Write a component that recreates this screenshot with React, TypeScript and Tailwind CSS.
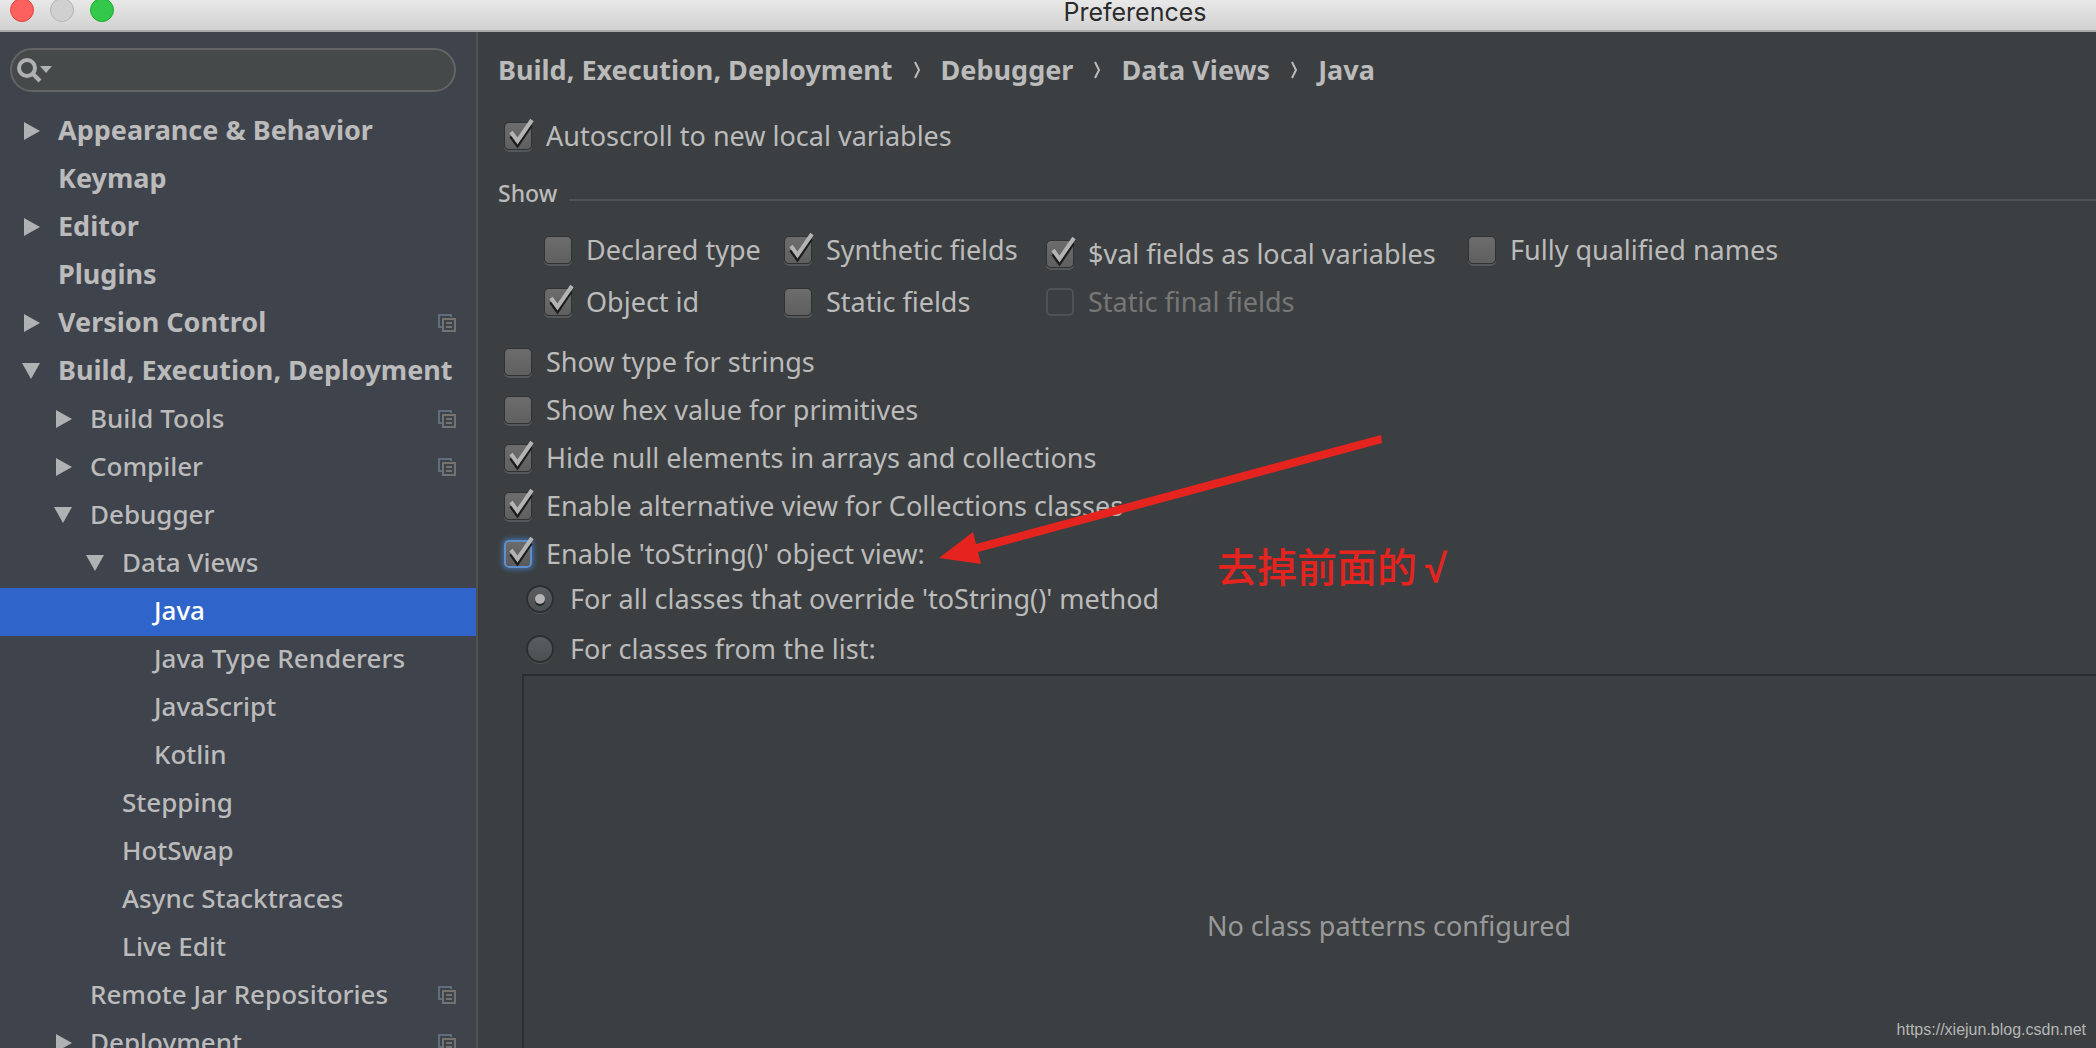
import React from "react";

type TreeItem = {
  label: string;
  level: 0 | 1 | 2 | 3;
  arrow?: "right" | "down";
  bold?: boolean;
  project?: boolean;
  selected?: boolean;
};

const tree: TreeItem[] = [
  { label: "Appearance & Behavior", level: 0, arrow: "right", bold: true },
  { label: "Keymap", level: 0, bold: true },
  { label: "Editor", level: 0, arrow: "right", bold: true },
  { label: "Plugins", level: 0, bold: true },
  { label: "Version Control", level: 0, arrow: "right", bold: true, project: true },
  { label: "Build, Execution, Deployment", level: 0, arrow: "down", bold: true },
  { label: "Build Tools", level: 1, arrow: "right", project: true },
  { label: "Compiler", level: 1, arrow: "right", project: true },
  { label: "Debugger", level: 1, arrow: "down" },
  { label: "Data Views", level: 2, arrow: "down" },
  { label: "Java", level: 3, selected: true },
  { label: "Java Type Renderers", level: 3 },
  { label: "JavaScript", level: 3 },
  { label: "Kotlin", level: 3 },
  { label: "Stepping", level: 2 },
  { label: "HotSwap", level: 2 },
  { label: "Async Stacktraces", level: 2 },
  { label: "Live Edit", level: 2 },
  { label: "Remote Jar Repositories", level: 1, project: true },
  { label: "Deployment", level: 1, arrow: "right", project: true },
];

const indent = { 0: "pl-[22px]", 1: "pl-[54px]", 2: "pl-[86px]", 3: "pl-[118px]" };

function TreeArrow({ dir }: { dir?: "right" | "down" }) {
  return (
    <svg viewBox="0 0 18 18" className="mr-[18px] size-[18px] shrink-0" fill="#afb1b3" aria-hidden="true">
      {dir === "right" && <path d="M2 0 L18 9 L2 18 Z" />}
      {dir === "down" && <path d="M0 1 H18 L9 17 Z" />}
    </svg>
  );
}

function ProjectIcon() {
  return (
    <svg viewBox="0 0 18 18" className="size-[18px] shrink-0" fill="none" strokeWidth="2" aria-hidden="true">
      <path d="M5 13 H1 V1 H13 V3" stroke="#5f6d79" />
      <path d="M5 5 H17 V17 H5 Z M8 9 H14 M8 13 H14" stroke="#747270" />
    </svg>
  );
}

type CheckProps = { label: string; checked?: boolean; disabled?: boolean; focused?: boolean };

function Check({ label, checked, disabled, focused }: CheckProps) {
  const face = disabled
    ? "border-2 border-[#4f5152] bg-transparent"
    : focused
      ? "border-2 border-[#5e8fc9] bg-linear-to-b from-[#6b6b6b] to-[#5a5a5a] shadow-[0_0_4px_2px_#3f6698]"
      : "border border-[#2f3132] bg-linear-to-b from-[#6c6c6c] to-[#5f5f5f] shadow-[0_2px_0_#555758]";
  return (
    <label className={`flex h-12 w-fit items-center gap-[14px] whitespace-nowrap ${disabled ? "text-[#777777]" : ""}`}>
      <span className="relative size-7 shrink-0">
        <input
          type="checkbox"
          defaultChecked={checked}
          disabled={disabled}
          className={`peer block size-7 appearance-none rounded-[5px] outline-none ${face}`}
        />
        <svg
          viewBox="0 0 32 32"
          className="pointer-events-none absolute -top-1 left-0 hidden size-8 peer-checked:block"
          fill="none"
          aria-hidden="true"
        >
          <path d="M7 18 L13.5 27 L27 7" stroke="#1c1c1c" strokeWidth="4" />
          <path d="M7 14 L13.5 23 L28 2" stroke="#b4b4b4" strokeWidth="4" />
        </svg>
      </span>
      <span>{label}</span>
    </label>
  );
}

function Radio({ label, checked }: { label: string; checked?: boolean }) {
  return (
    <label className="flex h-[50px] w-fit items-center gap-4 whitespace-nowrap">
      <span className="relative size-7 shrink-0">
        <input
          type="radio"
          name="scope"
          defaultChecked={checked}
          className="peer block size-7 appearance-none rounded-full border-2 border-[#2d2f30] bg-linear-to-b from-[#5a5e60] to-[#4b5052] shadow-[0_1px_0_#505354] outline-none"
        />
        <span className="pointer-events-none absolute top-[9px] left-[9px] hidden size-[10px] rounded-full bg-[#b4b4b4] shadow-[0_2px_0_#222] peer-checked:block" />
      </span>
      <span>{label}</span>
    </label>
  );
}

const crumbs = ["Build, Execution, Deployment", "Debugger", "Data Views", "Java"];

export default function App() {
  return (
    <div className="relative flex h-screen flex-col overflow-hidden bg-[#3c3f41] font-['Noto_Sans','Open_Sans',sans-serif] text-[26px] leading-9 font-medium text-[#bbbbbb]">
      <header className="relative flex h-8 shrink-0 items-center border-b-2 border-[#a9a9a9] bg-linear-to-b from-[#e8e8e8] to-[#d2d2d2]">
        <div className="flex -translate-y-[5px] gap-4 pl-[10px]">
          <button aria-label="Close" className="size-6 rounded-full border border-[#e2463f] bg-[#fc615d]" />
          <button aria-label="Minimize" className="size-6 rounded-full border border-[#b4b4b4] bg-[#d0d0d0]" />
          <button aria-label="Zoom" className="size-6 rounded-full border border-[#1dad2b] bg-[#34c84a]" />
        </div>
        <h1 className="absolute inset-x-0 top-0 pl-[174px] text-center font-[Inter,sans-serif] text-[25px] leading-6 font-normal text-[#2b2b2b]">
          Preferences
        </h1>
      </header>

      <div className="flex min-h-0 flex-1">
        <aside className="flex w-[478px] shrink-0 flex-col overflow-hidden border-r-2 border-[#515151] bg-[#3f434c] pt-4">
          <div className="relative mr-5 ml-[10px]">
            <input
              type="search"
              aria-label="Search settings"
              className="block h-11 w-full appearance-none rounded-full border-2 border-[#646464] bg-[#45494a] pr-4 pl-12 outline-none"
            />
            <svg viewBox="0 0 36 26" className="pointer-events-none absolute top-[9px] left-[6px] h-[26px] w-9" aria-hidden="true">
              <circle cx="11" cy="11" r="8" fill="none" stroke="#afb1b3" strokeWidth="4" />
              <path d="M16 16 L24 24" stroke="#afb1b3" strokeWidth="4" />
              <path d="M24 9 H36 L30 16 Z" fill="#afb1b3" />
            </svg>
          </div>
          <ul className="mt-4">
            {tree.map((t) => (
              <li key={t.label}>
                <button
                  className={`flex h-12 w-full items-center pr-5 pb-0.5 text-left whitespace-nowrap ${indent[t.level]} ${t.bold ? "text-[27px] font-bold" : ""} ${t.selected ? "bg-[#2f65ca] text-white" : ""}`}
                >
                  <TreeArrow dir={t.arrow} />
                  <span className="flex-1 pb-0.5">{t.label}</span>
                  {t.project && <ProjectIcon />}
                </button>
              </li>
            ))}
          </ul>
        </aside>

        <main className="relative flex min-w-0 flex-1 flex-col overflow-hidden pt-[14px] text-[27px] font-normal">
          <nav aria-label="Breadcrumb" className="flex h-12 items-center pl-5 font-bold whitespace-nowrap">
            {crumbs.map((c, i) => (
              <React.Fragment key={c}>
                {i > 0 && (
                  <svg viewBox="0 0 8 18" className="mx-5 h-[18px] w-2" fill="none" stroke="#bbbbbb" strokeWidth="2" aria-hidden="true">
                    <path d="M2 1 L6 9 L2 17" />
                  </svg>
                )}
                <a href="#">{c}</a>
              </React.Fragment>
            ))}
          </nav>

          <div className="mt-[18px] pl-[26px]">
            <Check label="Autoscroll to new local variables" checked />
          </div>

          <fieldset className="mt-[15px]">
            <legend className="flex w-full items-center gap-3 pl-5 text-[23px] leading-9 font-medium">
              Show
              <span className="mt-[14px] h-[2px] flex-1 bg-[#515151]" />
            </legend>
            <div className="mt-[15px] grid w-fit grid-cols-[240px_262px_422px_auto] pl-[66px]">
              <Check label="Declared type" />
              <Check label="Synthetic fields" checked />
              <div className="pt-1">
                <Check label="$val fields as local variables" checked />
              </div>
              <Check label="Fully qualified names" />
              <Check label="Object id" checked />
              <Check label="Static fields" />
              <Check label="Static final fields" disabled />
            </div>
          </fieldset>

          <div className="mt-3 pl-[26px]">
            <Check label="Show type for strings" />
            <Check label="Show hex value for primitives" />
            <Check label="Hide null elements in arrays and collections" checked />
            <Check label="Enable alternative view for Collections classes" checked />
            <Check label="Enable 'toString()' object view:" checked focused />
          </div>
          <div className="-mt-1 pl-12">
            <Radio label="For all classes that override 'toString()' method" checked />
            <Radio label="For classes from the list:" />
          </div>

          <section className="ml-11 flex flex-1 justify-center border-t-2 border-l-2 border-[#2b2d2e] pt-[232px] pl-[158px] text-[#999999]">
            <p>No class patterns configured</p>
          </section>
        </main>
      </div>

      <svg viewBox="0 0 444 130" className="pointer-events-none absolute top-[435px] left-[939px] h-[130px] w-[444px]" fill="#e5241f" aria-hidden="true">
        <path d="M0 123 L34 97 L37 109 L442 0 L443 8 L39 117 L42 129 Z" />
      </svg>
      <p className="absolute top-[537px] left-[1217px] font-['Noto_Sans_CJK_SC',sans-serif] text-[40px] leading-[56px] font-medium whitespace-nowrap text-[#e5241f]">
        去掉前面的<span className="ml-2 font-['Liberation_Sans',sans-serif] font-bold">√</span>
      </p>
      <p className="absolute right-[10px] bottom-2 font-['Liberation_Sans',sans-serif] text-base leading-5 font-normal text-[#b4b6b7]">
        https://xiejun.blog.csdn.net
      </p>
    </div>
  );
}
